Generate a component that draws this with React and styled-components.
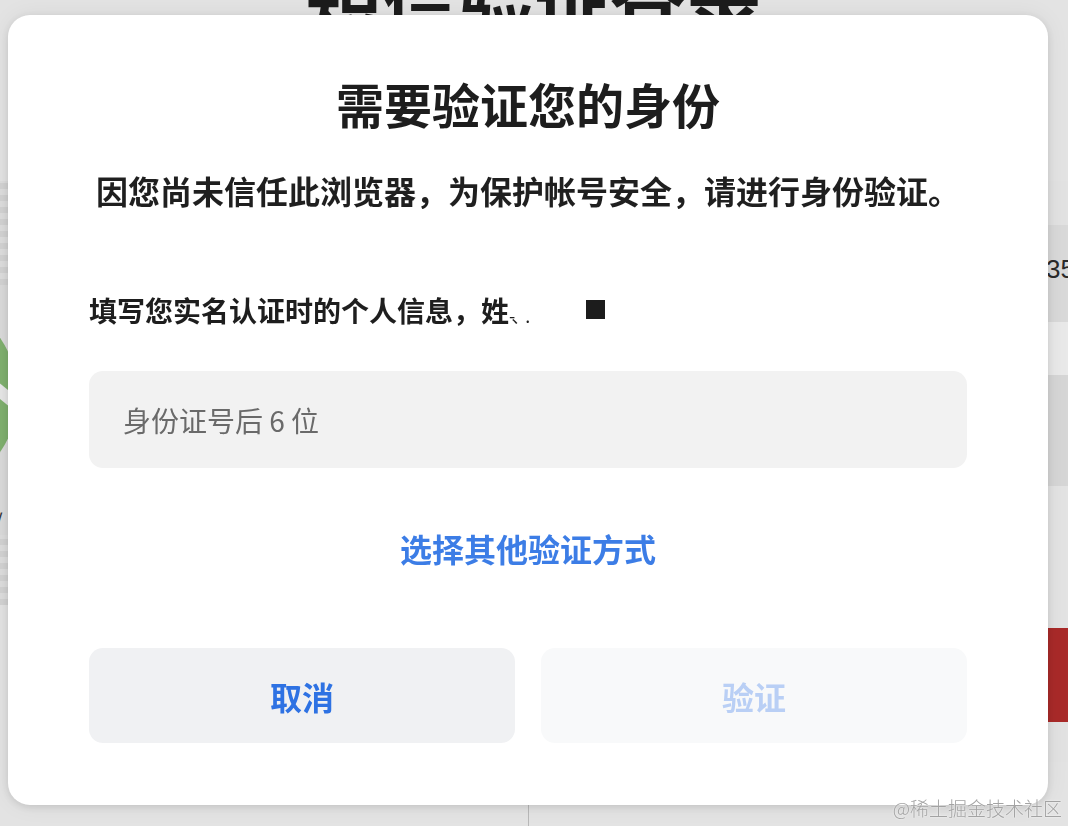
import styled, { createGlobalStyle } from "styled-components";

const GlobalStyle = createGlobalStyle`
  html, body {
    margin: 0;
    padding: 0;
    height: 100%;
    overflow: hidden;
  }
  body {
    font-family: "Noto Sans CJK SC", "Noto Sans", sans-serif;
    background: #e3e3e3;
  }
  * { box-sizing: border-box; }
`;

export default function App() {
  return (
    <>
      <GlobalStyle />
      <Backdrop>
        <PageTitle>短信验证登录</PageTitle>
        <PageBody>
          <SideColumn>
            <Checker $h={104} />
            <Avatar>
              <svg width="220" height="220" viewBox="0 0 220 220">
                <circle cx="110" cy="110" r="100" fill="#7fb06e" />
                <path d="M160 80 L215 125" stroke="#e6e6e6" strokeWidth="12" fill="none" />
              </svg>
            </Avatar>
            <SideMark>/</SideMark>
            <Checker $h={70} />
          </SideColumn>
          <FormColumn>
            <Band $tone="#e2e2e2" $h={44} />
            <Band $tone="#d9d9d9" $h={97}>
              <BandText>35</BandText>
            </Band>
            <Band $tone="#e9e9e9" $h={53} />
            <Band $tone="#d6d6d6" $h={111} />
            <Band $tone="#e3e3e3" $h={142} />
            <Band $tone="#a92a29" $h={94} />
            <Band $tone="#e2e2e2" $h={40} />
          </FormColumn>
        </PageBody>
        <Divider />
      </Backdrop>

      <Overlay>
        <Dialog>
          <Title>需要验证您的身份</Title>
          <Subtitle>因您尚未信任此浏览器，为保护帐号安全，请进行身份验证。</Subtitle>
          <Label>
            填写您实名认证时的个人信息，姓<Garble>-、.</Garble>
            <Square />
          </Label>
          <Input placeholder="身份证号后 6 位" />
          <SwitchLink>选择其他验证方式</SwitchLink>
          <Actions>
            <ActionButton>取消</ActionButton>
            <ActionButton $disabled>验证</ActionButton>
          </Actions>
        </Dialog>
      </Overlay>
      <Watermark>@稀土掘金技术社区</Watermark>
    </>
  );
}

const Backdrop = styled.div`
  height: 100vh;
  display: flex;
  flex-direction: column;
  background: #e3e3e3;
  overflow: hidden;
`;

const PageTitle = styled.div`
  margin-top: -44px;
  text-align: center;
  font-size: 76px;
  line-height: 90px;
  font-weight: 700;
  color: #1c1c1c;
`;

const PageBody = styled.div`
  flex: 1;
  display: grid;
  grid-template-columns: 8px 1fr;
  align-items: start;
  padding-top: 135px;
`;

const SideColumn = styled.div`
  display: flex;
  flex-direction: column;
  overflow: hidden;
  background: #dadada;
`;

const Checker = styled.div`
  height: ${(p) => p.$h}px;
  flex-shrink: 0;
  background-image: repeating-linear-gradient(
    0deg,
    #d2d2d2 0 6px,
    #dddddd 6px 12px
  );
`;

const Avatar = styled.div`
  height: 220px;
  flex-shrink: 0;
  margin-left: -192px;
  svg { display: block; }
`;

const SideMark = styled.div`
  font-size: 22px;
  color: #333;
  margin-left: -6px;
  line-height: 30px;
`;

const FormColumn = styled.div`
  display: flex;
  flex-direction: column;
  padding-left: 1038px;
`;

const Band = styled.div`
  height: ${(p) => p.$h}px;
  flex-shrink: 0;
  background: ${(p) => p.$tone};
  display: flex;
  align-items: center;
  overflow: hidden;
`;

const BandText = styled.span`
  font-family: "Liberation Sans", Arial, sans-serif;
  font-size: 26px;
  color: #2a2a2a;
  margin-top: -8px;
  white-space: nowrap;
`;

const Divider = styled.div`
  position: fixed;
  left: 528px;
  bottom: 0;
  width: 1px;
  height: 24px;
  background: #b8b8b8;
`;

const Overlay = styled.div`
  position: fixed;
  inset: 0;
  padding: 15px 20px 21px 8px;
  display: flex;
`;

const Dialog = styled.div`
  flex: 1;
  background: #ffffff;
  border-radius: 22px;
  box-shadow: 0 2px 8px rgba(0, 0, 0, 0.12), 0 0 24px rgba(0, 0, 0, 0.06);
  padding: 58px 81px 0;
  display: flex;
  flex-direction: column;
  align-items: center;
  & > * { flex-shrink: 0; }
`;

const Title = styled.h1`
  margin: 0;
  font-size: 48px;
  line-height: 60px;
  font-weight: 700;
  color: #1d1d1d;
`;

const Subtitle = styled.p`
  margin: 36px 0 0;
  font-size: 32px;
  line-height: 42px;
  font-weight: 700;
  color: #1f1f1f;
  white-space: nowrap;
`;

const Label = styled.div`
  align-self: stretch;
  margin-top: 76px;
  font-size: 28px;
  line-height: 36px;
  font-weight: 700;
  color: #1e1e1e;
  display: flex;
  align-items: center;
`;

const Garble = styled.span`
  font-size: 18px;
  font-weight: 400;
  margin-top: 10px;
  width: 77px;
  letter-spacing: -4px;
`;

const Square = styled.span`
  width: 19px;
  height: 19px;
  background: #1c1c1c;
  margin-top: -2px;
`;

const Input = styled.input`
  align-self: stretch;
  margin-top: 38px;
  height: 97px;
  border: none;
  outline: none;
  border-radius: 14px;
  background: #f2f2f2;
  padding: 0 34px;
  font-family: "Noto Sans CJK SC", "Noto Sans", sans-serif;
  font-size: 28px;
  color: #333;
  &::placeholder {
    color: #6a6a6a;
  }
`;

const SwitchLink = styled.a`
  margin-top: 59px;
  font-size: 32px;
  line-height: 42px;
  font-weight: 700;
  color: #3c7de6;
  cursor: pointer;
`;

const Actions = styled.div`
  align-self: stretch;
  margin-top: 79px;
  display: grid;
  grid-template-columns: 1fr 1fr;
  gap: 26px;
`;

const ActionButton = styled.button`
  height: 95px;
  border: none;
  border-radius: 14px;
  font-family: "Noto Sans CJK SC", "Noto Sans", sans-serif;
  font-size: 32px;
  font-weight: 700;
  background: ${(p) => (p.$disabled ? "#f8f9fa" : "#f0f1f3")};
  color: ${(p) => (p.$disabled ? "#b9cff5" : "#2e72e3")};
  cursor: ${(p) => (p.$disabled ? "default" : "pointer")};
`;

const Watermark = styled.div`
  position: fixed;
  right: 6px;
  bottom: 6px;
  font-size: 19px;
  line-height: 24px;
  font-weight: 300;
  color: #a3a3a3;
  text-shadow: 0 0 2px #fff;
`;
